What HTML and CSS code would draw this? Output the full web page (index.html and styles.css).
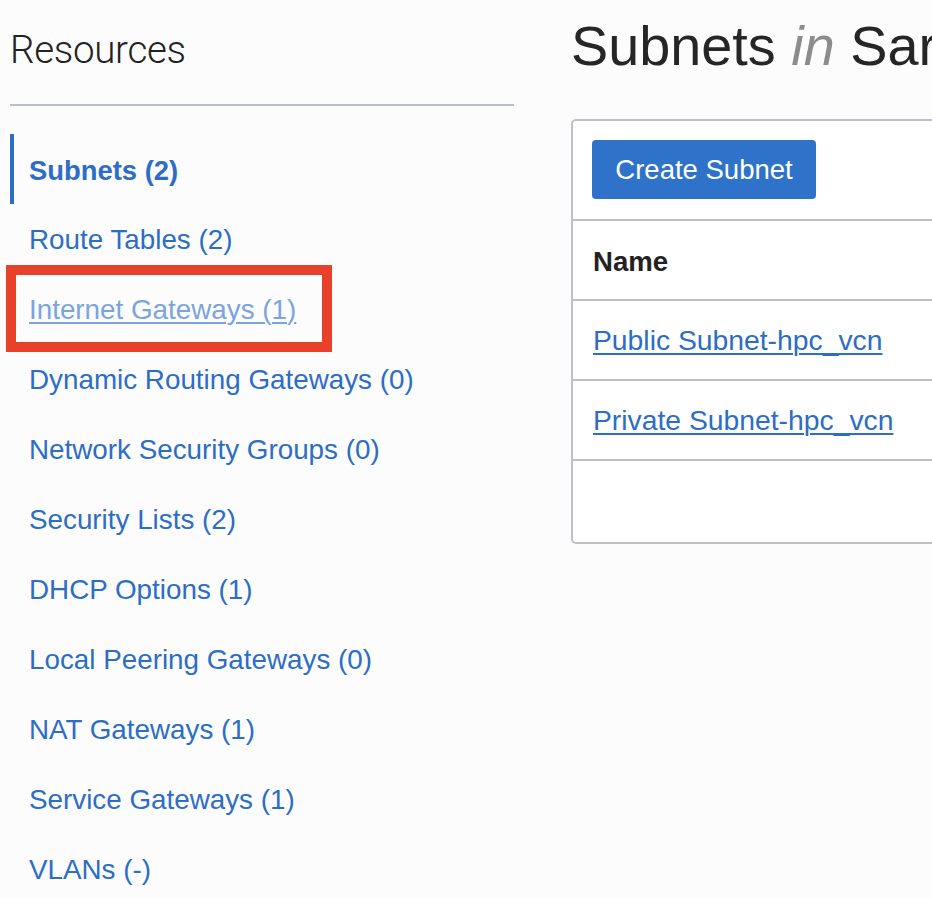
FILE: index.html
```html
<!DOCTYPE html>
<html>
<head>
<meta charset="utf-8">
<link rel="stylesheet" href="styles.css">
</head>
<body>
<div class="page">
  <aside class="sidebar">
    <h2 class="side-title">Resources</h2>
    <nav class="side-nav">
      <a class="nav-item active" href="#">Subnets (2)</a>
      <a class="nav-item" href="#">Route Tables (2)</a>
      <a class="nav-item visited" href="#">Internet Gateways (1)<span class="highlight"></span></a>
      <a class="nav-item" href="#">Dynamic Routing Gateways (0)</a>
      <a class="nav-item" href="#">Network Security Groups (0)</a>
      <a class="nav-item" href="#">Security Lists (2)</a>
      <a class="nav-item" href="#">DHCP Options (1)</a>
      <a class="nav-item" href="#">Local Peering Gateways (0)</a>
      <a class="nav-item" href="#">NAT Gateways (1)</a>
      <a class="nav-item" href="#">Service Gateways (1)</a>
      <a class="nav-item" href="#">VLANs (-)</a>
    </nav>
  </aside>
  <main class="content">
    <h1 class="page-title">Subnets <em>in</em> Sar</h1>
    <section class="card">
      <div class="toolbar">
        <button class="btn-primary">Create Subnet</button>
      </div>
      <div class="table">
        <div class="row head">Name</div>
        <div class="row"><a href="#" class="link">Public Subnet-hpc_vcn</a></div>
        <div class="row"><a href="#" class="link">Private Subnet-hpc_vcn</a></div>
        <div class="row empty"></div>
      </div>
    </section>
  </main>
</div>
</body>
</html>
```

FILE: styles.css
```css
html, body {
  margin: 0;
  padding: 0;
  background: #fcfcfc;
  overflow: hidden;
  font-family: "Liberation Sans", Arial, sans-serif;
}

.page {
  display: flex;
  gap: 57px;
  padding-left: 10px;
}

.sidebar {
  width: 504px;
  flex: none;
}

.side-title {
  margin: 0;
  box-sizing: border-box;
  height: 106px;
  padding-top: 27px;
  font-family: "Roboto", "Liberation Sans", sans-serif;
  font-weight: 300;
  font-size: 38.5px;
  line-height: 46px;
  color: #222;
  letter-spacing: -0.3px;
  border-bottom: 2px solid #b9bec4;
}

.side-nav {
  display: flex;
  flex-direction: column;
  margin-top: 28px;
}

.nav-item {
  position: relative;
  display: flex;
  align-items: center;
  height: 70px;
  padding-top: 1px;
  box-sizing: border-box;
  padding-left: 19px;
  font-size: 27.8px;
  color: #2c6dc5;
  text-decoration: none;
}

.nav-item.active {
  border-left: 4px solid #2c6dc5;
  padding-left: 15px;
  padding-top: 3px;
  font-weight: bold;
  font-size: 27.4px;
}

.nav-item.visited {
  color: #7ba4de;
  text-decoration: underline;
  text-decoration-thickness: 1.5px;
  text-underline-offset: 3px;
}

.highlight {
  position: absolute;
  left: -4px;
  top: -9px;
  width: 326px;
  height: 87px;
  box-sizing: border-box;
  border: 10px solid #e8412b;
  pointer-events: none;
}

.content {
  flex: 1;
  min-width: 0;
  overflow: hidden;
}

.page-title {
  margin: 0;
  padding-top: 18px;
  font-weight: normal;
  font-size: 55.8px;
  line-height: 55px;
  color: #262626;
  white-space: nowrap;
}

.page-title em {
  color: #8c8c8c;
}

.card {
  width: 720px;
  margin-top: 46px;
  border: 2px solid #bdc1c6;
  border-radius: 5px;
  background: #fff;
}

.toolbar {
  padding: 19px 20px 20px 19px;
  border-bottom: 2px solid #bdc1c6;
}

.btn-primary {
  display: block;
  width: 224px;
  height: 59px;
  border: none;
  border-radius: 4px;
  background: #2e73c9;
  color: #fff;
  font-family: "Liberation Sans", Arial, sans-serif;
  font-size: 27.5px;
  padding: 0;
}

.row {
  display: flex;
  align-items: center;
  height: 78px;
  padding-left: 20px;
  border-bottom: 2px solid #bdc1c6;
  font-size: 28.3px;
}

.row.head {
  font-weight: bold;
  color: #222;
  font-size: 27.6px;
  padding-top: 3px;
  box-sizing: border-box;
  height: 80px;
}

.row.empty {
  border-bottom: none;
  height: 81px;
}

.link {
  color: #2c6dc5;
  text-decoration: underline;
  text-decoration-thickness: 1.5px;
  text-underline-offset: 3px;
}
```
